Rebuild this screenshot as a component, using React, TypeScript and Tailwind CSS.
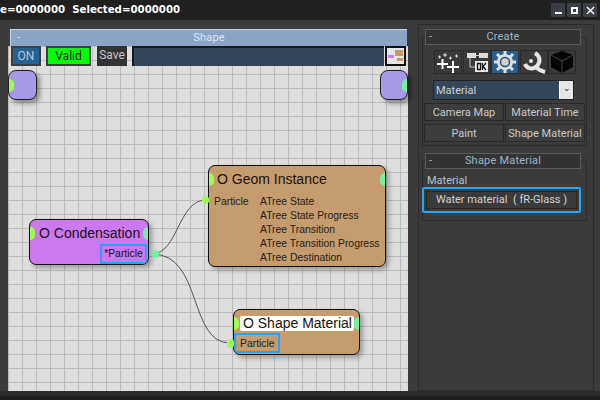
const panelFont = { fontFamily: 'Roboto, sans-serif' };

const Port = ({ className }: { className: string }) => (
  <span className={`absolute rounded-full ${className}`} />
);

const CreateIcons = [
  <svg key="add" viewBox="0 0 26 24" className="w-[26px] h-[24px]">
    <path d="M2 14h11M7.500 9v10M12 17h12M18 11v12" stroke="#fff" strokeWidth="2" />
    <path d="M8 5h4M10 3v4M14 8h3M15.500 6.500v3M20 6h3M21.500 4.500v3M3 7h3M4.500 5.500v3" stroke="#ddd" strokeWidth="1" />
  </svg>,
  <svg key="ok" viewBox="0 0 26 24" className="w-[26px] h-[24px]">
    <rect x="3" y="3" width="9" height="5" fill="#ddd" />
    <rect x="15" y="3" width="9" height="5" fill="#ddd" />
    <path d="M12 5.500h3M6 8v9h5" stroke="#ccc" strokeWidth="1" fill="none" />
    <rect x="11" y="11" width="13" height="11" fill="#e8e8e8" />
    <path d="M13.500 13.500h3v6h-3zM18.500 13v7M22 13l-3 3.500 3 3.500" stroke="#111" strokeWidth="1.300" fill="none" />
  </svg>,
  <svg key="gear" viewBox="0 0 26 24" className="w-[26px] h-[24px]">
    <circle cx="13" cy="12" r="8" fill="#ddd" />
    <path d="M13 1v22M2 12h22M5 4l16 16M21 4L5 20" stroke="#ddd" strokeWidth="3" />
    <circle cx="13" cy="12" r="4.500" fill="#d0d0d0" stroke="#2a4f70" strokeWidth="1.500" />
  </svg>,
  <svg key="wrench" viewBox="0 0 26 24" className="w-[26px] h-[24px]">
    <path d="M14 3C19 6 20 12 16 16C12 20 6 19 4 14" stroke="#e6e6e6" strokeWidth="4" fill="none" />
    <path d="M14 16C17 20 20 21 24 22" stroke="#e6e6e6" strokeWidth="4" fill="none" />
    <circle cx="10" cy="11" r="2" fill="#e6e6e6" />
  </svg>,
  <svg key="box" viewBox="0 0 26 24" className="w-[26px] h-[24px]">
    <path d="M13 1l11 4v12l-11 6-11-6V5z" fill="#050505" />
    <path d="M2 5l11 6 11-6M13 11v12" stroke="#444" strokeWidth="1" fill="none" />
  </svg>,
];

const RollupHeader = ({ title }: { title: string }) => (
  <div className="relative z-10 h-[16px] border border-[#5a5a5a] bg-[#333333] text-[#9db4c8] text-[11px] tracking-[0.2px] leading-[14px] text-center ml-[6px] mr-[9px]">
    <span className="absolute left-[3px]">-</span>
    {title}
  </div>
);

const PanelButton = ({ label }: { label: string }) => (
  <div className="flex-1 h-[18px] bg-[#3d3d3d] border border-[#292929] text-[#c8c8c8] text-[11px] leading-[17px] text-center whitespace-nowrap">
    {label}
  </div>
);

export default function App() {
  return (
    <div className="w-[600px] h-[400px] overflow-hidden flex flex-col bg-[#3b3b3b]" style={panelFont}>
      {/* title bar */}
      <div className="h-[20px] shrink-0 flex items-center justify-between bg-[#202020] pr-[3px]">
        <span className="text-white text-[10.200px] font-bold leading-[20px] whitespace-pre" style={{ fontFamily: '"DejaVu Sans", sans-serif' }}>
          e=0000000  Selected=0000000
        </span>
        <div className="flex gap-[2px]">
          <div className="w-[14px] h-[14px] bg-[#3a3f46] flex items-end justify-center pb-[3px]">
            <span className="block w-[7px] h-[2px] bg-white" />
          </div>
          <div className="w-[14px] h-[14px] bg-[#3a3f46] flex items-center justify-center">
            <span className="block w-[7px] h-[7px] border-2 border-white" />
          </div>
          <div className="w-[14px] h-[14px] bg-[#3a3f46] flex items-center justify-center">
            <svg viewBox="0 0 10 10" className="w-[9px] h-[9px]">
              <path d="M1 1l8 8M9 1l-8 8" stroke="#fff" strokeWidth="1.500" />
            </svg>
          </div>
        </div>
      </div>

      <div className="flex-1 min-h-0 flex">
        {/* left: schematic */}
        <div className="w-[408px] shrink-0 pl-[8px] pt-[9px] flex flex-col">
          <div className="h-[17px] ml-[2px] mr-[1px] bg-[#8ba3c4] border-t border-l border-[#c6d4e6] text-[#dfe7f0] text-[11px] tracking-[0.2px] leading-[15px] text-center relative">
            <span className="absolute left-[6px]">-</span>
            Shape
          </div>
          <div className="relative flex-1 min-h-0 bg-[#dedede] bg-[linear-gradient(#bcbcbc_1px,transparent_1px),linear-gradient(90deg,#bcbcbc_1px,transparent_1px)] bg-[size:14px_14px]">
            {/* toolbar */}
            <div className="relative z-10 h-[21px] flex pl-[3px] pr-[1px] gap-[5px] text-[12px] leading-[17px]">
              <div className="w-[30px] h-[20px] bg-[#27618f] border-2 border-[#3a3f46] text-[#b4c6d6] text-center">ON</div>
              <div className="w-[45px] h-[20px] bg-[#00ff00] border-2 border-[#3a3f46] text-[#0a220a] text-center">Valid</div>
              <div className="w-[30px] h-[20px] bg-[#333333] text-[#c4c4c4] text-center ml-[1px] leading-[19px]">Save</div>
              <div className="w-[252px] h-[20px] bg-[#344658] border-t-2 border-l-2 border-[#1a1a1a]" />
              <div className="relative w-[21px] h-[20px] -ml-[4px] bg-[#e6e6e6] border-2 border-[#111111]">
                <span className="absolute left-[1px] top-[7px] w-[6px] h-[3px] bg-[#c87ee6]" />
                <span className="absolute left-[8px] top-[2px] w-[8px] h-[6px] bg-[#c49a6c]" />
                <span className="absolute left-[10px] top-[10px] w-[6px] h-[3px] bg-[#c49a6c]" />
              </div>
            </div>

            {/* wires */}
            <svg className="absolute inset-0 w-full h-full" viewBox="0 0 400 345" fill="none">
              <path d="M144 208C170 208 170 154 198 154" stroke="#555" strokeWidth="1" />
              <path d="M144 208C195 208 180 297 222 297" stroke="#555" strokeWidth="1" />
            </svg>

            {/* top stub nodes */}
            <div className="absolute left-0 top-[24px] w-[29px] h-[30px] rounded-[8px] border border-[#222] bg-[#a899e6] shadow-[3px_3px_5px_rgba(0,0,0,0.4)] overflow-hidden">
              <Port className="-left-[5px] top-[8px] w-[10px] h-[13px] bg-[#9dff55]" />
            </div>
            <div className="absolute left-[372px] top-[24px] w-[28px] h-[30px] rounded-[8px] border border-[#222] bg-[#a899e6] shadow-[3px_3px_5px_rgba(0,0,0,0.4)] overflow-hidden">
              <Port className="-right-[5px] top-[8px] w-[10px] h-[13px] bg-[#75f2a0]" />
            </div>

            {/* O Condensation */}
            <div className="absolute left-[21px] top-[173px] w-[120px] h-[46px] rounded-[7px] border border-[#111] bg-[#cc78ee] shadow-[3px_3px_5px_rgba(0,0,0,0.3)] overflow-hidden" style={{ fontFamily: '"Liberation Sans", sans-serif' }}>
              <Port className="-left-[5px] top-[7px] w-[10px] h-[13px] bg-[#9dff55]" />
              <Port className="-right-[5px] top-[7px] w-[10px] h-[13px] bg-[#75f2a0]" />
              <div className="text-[14px] leading-[18px] text-[#1a1020] pl-[9px] pt-[4px]">O Condensation</div>
              <div className="absolute right-[1px] bottom-0 w-[47px] h-[20px] border-2 border-[#25a5f0] rounded-[1px] text-[10.400px] leading-[16px] text-[#1a1020] text-center whitespace-nowrap">*Particle</div>
            </div>
            <Port className="left-[144px] top-[204px] w-[7px] h-[8px] bg-[#75f2a0]" />

            {/* O Geom Instance */}
            <div className="absolute left-[200px] top-[119px] w-[178px] h-[102px] rounded-[7px] border border-[#111] bg-[#c49c6e] shadow-[3px_3px_5px_rgba(0,0,0,0.3)] overflow-hidden" style={{ fontFamily: '"Liberation Sans", sans-serif' }}>
              <Port className="-left-[5px] top-[7px] w-[10px] h-[13px] bg-[#9dff55]" />
              <Port className="-right-[5px] top-[7px] w-[10px] h-[13px] bg-[#75f2a0]" />
              <div className="text-[14px] leading-[18px] text-[#1a1208] pl-[8px] pt-[4px]">O Geom Instance</div>
              <div className="flex pt-[7px] pl-[5px] text-[10.400px] leading-[14px] text-[#2a2010]">
                <div className="w-[46px]">Particle</div>
                <div className="flex flex-col whitespace-nowrap">
                  <span>ATree State</span>
                  <span>ATree State Progress</span>
                  <span>ATree Transition</span>
                  <span>ATree Transition Progress</span>
                  <span>ATree Destination</span>
                </div>
              </div>
            </div>
            <Port className="left-[194px] top-[150px] w-[7px] h-[8px] bg-[#9dff55]" />

            {/* O Shape Material */}
            <div className="absolute left-[225px] top-[263px] w-[127px] h-[46px] rounded-[7px] border border-[#111] bg-[#c49c6e] shadow-[3px_3px_5px_rgba(0,0,0,0.3)] overflow-hidden" style={{ fontFamily: '"Liberation Sans", sans-serif' }}>
              <Port className="-left-[5px] top-[7px] w-[10px] h-[13px] bg-[#9dff55]" />
              <Port className="-right-[5px] top-[7px] w-[10px] h-[13px] bg-[#75f2a0]" />
              <div className="ml-[6px] mt-[6px] w-[114px] h-[15px] rounded-[2px] bg-white text-[14px] leading-[15px] text-[#1a1208] pl-[3px] whitespace-nowrap">O Shape Material</div>
              <div className="absolute left-0 bottom-[1px] w-[46px] h-[20px] border-2 border-[#25a5f0] rounded-[1px] text-[10.400px] leading-[17px] text-[#2a2010] pl-[4px]">Particle</div>
            </div>
            <Port className="left-[219px] top-[293px] w-[7px] h-[9px] bg-[#9dff55]" />
          </div>
          <div className="h-[9px] shrink-0 -ml-[8px] bg-[#2c2c2c] border-b-4 border-[#1e1e1e]" />
        </div>

        {/* right: command panel */}
        <div className="flex-1 min-w-0 flex flex-col pt-[4px] pl-[10px] pr-[6px]">
          <div className="flex-1 border border-[#2b2b2b] pt-[4px] relative pr-[3px] pb-[4px] flex flex-col">
            <RollupHeader title="Create" />
            <div className="border border-[#2b2b2b] mx-[3px] -mt-[8px] pt-[12px] pb-[3px]">
              <div className="flex gap-[0.500px] pl-[11px]">
                {CreateIcons.map((icon, i) => (
                  <div key={i} className={`w-[28px] h-[24px] flex items-center justify-center border border-[#2a2a2a] ${i === 2 ? "bg-[#2a5f8c]" : "bg-[#3a3a3a]"}`}>
                    {icon}
                  </div>
                ))}
              </div>
              <div className="ml-[10px] mt-[6px] w-[141px] h-[20px] flex bg-[#344658] border border-[#222] text-[#c8d2dc] text-[11px] leading-[19px] pl-[2px]">
                <span className="flex-1">Material</span>
                <span className="w-[14px] h-full bg-[#e6e6e6] border-l border-white text-[#222] text-[9px] leading-[14px] text-center">⌄</span>
              </div>
              <div className="flex gap-[1px] mt-[3px] px-[1px]">
                <PanelButton label="Camera Map" />
                <PanelButton label="Material Time" />
              </div>
              <div className="flex gap-[1px] mt-[3px] px-[1px]">
                <PanelButton label="Paint" />
                <PanelButton label="Shape Material" />
              </div>
            </div>
            <div className="mt-[7px]"><RollupHeader title="Shape Material" /></div>
            <div className="border border-[#2b2b2b] mx-[3px] -mt-[8px] pt-[11px] h-[60px] relative">
              <div className="text-[#b4c4d0] text-[11px] leading-[14px] pl-[4px] mt-[1px]">Material</div>
              <div className="-ml-[1px] -mt-[1px] w-[159px] h-[26px] border-2 border-[#25a5f0] rounded-[2px] bg-[#3a3a3a] p-[2px]">
                <div className="h-full border border-dotted border-[#111] text-[#d2d2d2] text-[11px] leading-[16px] text-center whitespace-pre">Water material  ( fR-Glass )</div>
              </div>
            </div>
          </div>
          <div className="h-[9px] shrink-0 -ml-[10px] -mr-[6px] bg-[#2c2c2c] border-b-4 border-[#1e1e1e]" />
        </div>
      </div>
    </div>
  );
}
